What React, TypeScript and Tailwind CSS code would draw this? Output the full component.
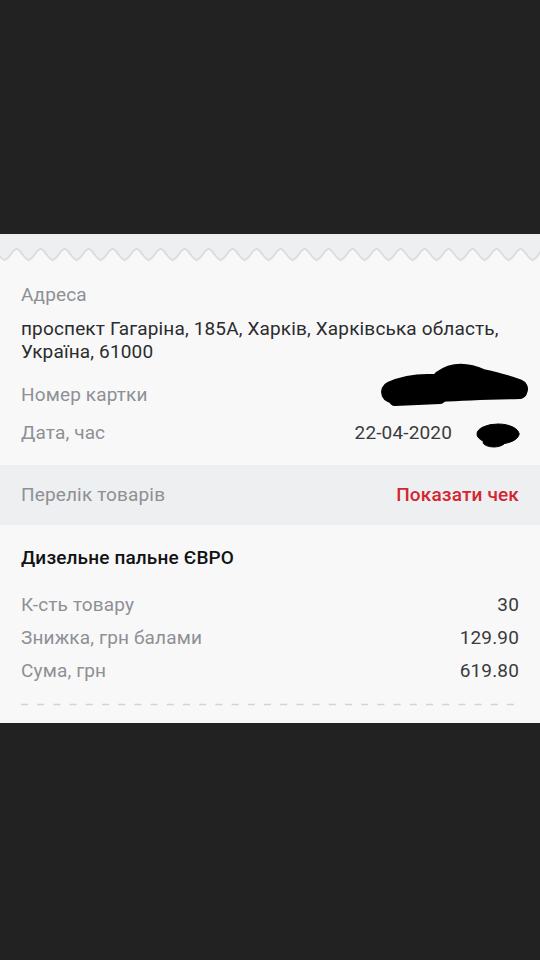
import React from "react";

function Wave() {
  const period = 24;
  const start = -7.4 - period;
  let pts = `M${start} 15 `;
  for (let x = start; x < 560; x += period) {
    const trough = x + period / 2;
    const next = x + period;
    pts += `C${x + 4} 15 ${x + 8} 26 ${trough} 26 C${trough + 4} 26 ${trough + 8} 15 ${next} 15 `;
  }
  const fillPath = pts + `L560 0 L${start} 0 Z`;
  return (
    <svg width="540" height="30" viewBox="0 0 540 30" className="block">
      <rect x="0" y="0" width="540" height="30" fill="#f8f8f9" />
      <path d={fillPath} fill="#eeeff1" />
      <path d={pts} fill="none" stroke="#dcdcde" strokeWidth="1.8" />
    </svg>
  );
}

function Row({ label, value, className = "" }: { label: string; value?: React.ReactNode; className?: string }) {
  return (
    <div className={`flex justify-between items-center h-[24px] leading-[24px] ${className}`}>
      <span className="text-[#8d9095]">{label}</span>
      <span className="text-[#3a3b3d]">{value}</span>
    </div>
  );
}

export default function App() {
  return (
    <div
      className="w-[540px] h-[960px] bg-[#222222] pt-[234px] overflow-hidden"
      style={{ fontFamily: "Roboto, 'Noto Sans', sans-serif" }}
    >
      <div className="relative w-[540px] h-[489px] bg-[#f8f8f9] text-[19px] tracking-[0.15px]">
        <Wave />
        <div className="px-[21px] pt-[19px]">
          <div className="h-[24px] leading-[24px] text-[#8d9095]">Адреса</div>
          <div className="mt-[10px] leading-[23px] text-[#2b2c2e]">
            проспект Гагаріна, 185А, Харків, Харківська область,
            <br />
            Україна, 61000
          </div>
          <Row label="Номер картки" value="" className="mt-[20px]" />
          <Row label="Дата, час" value={<span className="pr-[67px]">22-04-2020</span>} className="mt-[14px]" />
        </div>
        <div className="mt-[20px] h-[60px] bg-[#eeeff1] px-[21px] flex items-center justify-between">
          <span className="text-[#8d9095]">Перелік товарів</span>
          <span className="text-[#d42530] font-medium">Показати чек</span>
        </div>
        <div className="px-[21px] pt-[21px]">
          <div className="h-[24px] leading-[24px] text-[#111214] font-medium">Дизельне пальне ЄВРО</div>
          <Row label="К-сть товару" value="30" className="mt-[23px]" />
          <Row label="Знижка, грн балами" value="129.90" className="mt-[9px]" />
          <Row label="Сума, грн" value="619.80" className="mt-[9px]" />
          <svg className="block mt-[20px]" width="500" height="3" viewBox="0 0 500 3">
            <line x1="0" y1="1.5" x2="500" y2="1.5" stroke="#d2d3d6" strokeWidth="1.5" strokeDasharray="7 9.2" />
          </svg>
        </div>

        <svg className="absolute left-0 top-0" width="540" height="489" viewBox="0 0 540 489">
          <g fill="#000" stroke="#000" strokeLinecap="round" strokeLinejoin="round">
            <path d="M392 158 Q410 150 432 151 L442 156" strokeWidth="22" fill="none" />
            <path d="M442 146 Q458 134 482 145 Q505 150 518 155" strokeWidth="20" fill="none" />
            <path d="M440 161 Q470 159 520 158" strokeWidth="14" fill="none" />
            <path d="M395 166 L440 164" strokeWidth="12" fill="none" />
            <path d="M440 145 L500 150 L515 156 L440 164 Z" strokeWidth="6" />
            <ellipse cx="498" cy="200" rx="21" ry="10" />
            <ellipse cx="494" cy="208" rx="11" ry="5" />
          </g>
        </svg>
      </div>
    </div>
  );
}
